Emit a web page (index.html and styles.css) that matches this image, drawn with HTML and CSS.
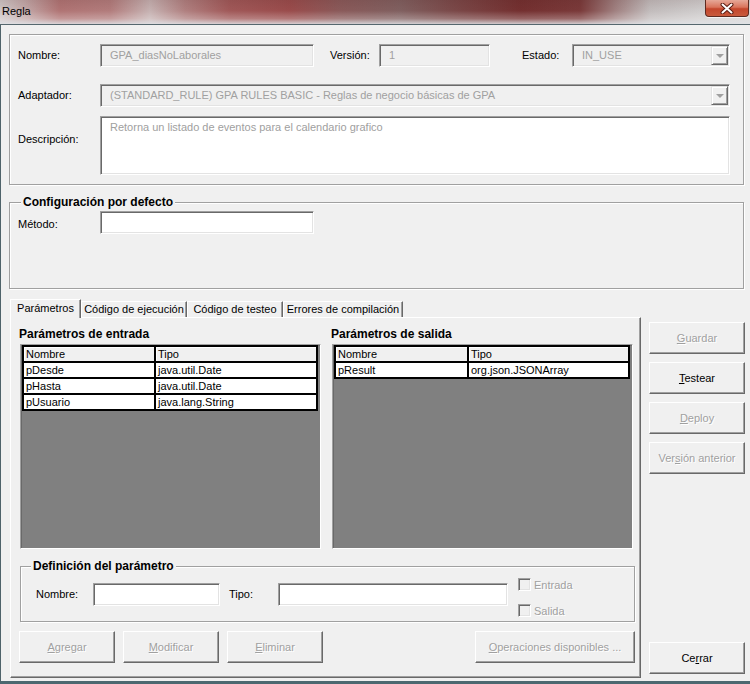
FILE: index.html
```html
<!DOCTYPE html>
<html lang="es">
<head>
<meta charset="utf-8">
<title>Regla</title>
<link rel="stylesheet" href="styles.css">
</head>
<body>
<div class="window">
  <div class="titlebar">
    <span class="title">Regla</span>
    <div class="close-btn">
      <svg width="14" height="11" viewBox="0 0 14 11"><path d="M2.5 1.5 L11.5 9.5 M11.5 1.5 L2.5 9.5" stroke="#5a1c12" stroke-width="4" stroke-linecap="round" fill="none"/><path d="M2.5 1.5 L11.5 9.5 M11.5 1.5 L2.5 9.5" stroke="#ffffff" stroke-width="2" stroke-linecap="round" fill="none"/></svg>
    </div>
  </div>
  <div class="client">
    <section class="group general">
      <div class="row">
        <span class="lbl lbl-main">Nombre:</span>
        <div class="field disabled w-nombre">GPA_diasNoLaborales</div>
        <span class="lbl lbl-version">Versión:</span>
        <div class="field disabled w-version">1</div>
        <span class="lbl lbl-estado">Estado:</span>
        <div class="field disabled combo w-estado"><span class="combo-text">IN_USE</span><span class="combo-btn"><span class="tri"></span></span></div>
      </div>
      <div class="row row-adapt">
        <span class="lbl lbl-main">Adaptador:</span>
        <div class="field disabled combo w-adapt"><span class="combo-text">(STANDARD_RULE) GPA RULES BASIC - Reglas de negocio básicas de GPA</span><span class="combo-btn"><span class="tri"></span></span></div>
      </div>
      <div class="row row-desc">
        <span class="lbl lbl-main lbl-desc">Descripción:</span>
        <div class="field area">Retorna un listado de eventos para el calendario grafico</div>
      </div>
    </section>

    <fieldset class="fgroup config">
      <legend>Configuración por defecto</legend>
      <div class="row">
        <span class="lbl lbl-main lbl-metodo">Método:</span>
        <div class="field white w-nombre"></div>
      </div>
    </fieldset>

    <div class="lower">
      <div class="tabctl">
        <div class="tabstrip">
          <div class="tab active t1">Parámetros</div>
          <div class="tab t2">Código de ejecución</div>
          <div class="tab t3">Código de testeo</div>
          <div class="tab t4">Errores de compilación</div>
        </div>
        <div class="panel">
          <div class="param-cols">
            <div class="param-col">
              <div class="heading">Parámetros de entrada</div>
              <div class="list">
                <table class="grid">
                  <colgroup><col class="c-name"><col></colgroup>
                  <thead><tr><th>Nombre</th><th>Tipo</th></tr></thead>
                  <tbody>
                    <tr><td>pDesde</td><td>java.util.Date</td></tr>
                    <tr><td>pHasta</td><td>java.util.Date</td></tr>
                    <tr><td>pUsuario</td><td>java.lang.String</td></tr>
                  </tbody>
                </table>
              </div>
            </div>
            <div class="param-col">
              <div class="heading">Parámetros de salida</div>
              <div class="list">
                <table class="grid">
                  <colgroup><col class="c-name2"><col></colgroup>
                  <thead><tr><th>Nombre</th><th>Tipo</th></tr></thead>
                  <tbody>
                    <tr><td>pResult</td><td>org.json.JSONArray</td></tr>
                  </tbody>
                </table>
              </div>
            </div>
          </div>

          <fieldset class="fgroup def">
            <legend>Definición del parámetro</legend>
            <div class="def-row">
              <span class="lbl lbl-dn">Nombre:</span>
              <div class="field white w-dn"></div>
              <span class="lbl lbl-dt">Tipo:</span>
              <div class="field white w-dt"></div>
              <div class="checks">
                <div class="chk"><span class="box"></span><span>Entrada</span></div>
                <div class="chk"><span class="box"></span><span>Salida</span></div>
              </div>
            </div>
          </fieldset>

          <div class="action-row">
            <div class="btn disabled w-act"><span><u>A</u>gregar</span></div>
            <div class="btn disabled w-act"><span><u>M</u>odificar</span></div>
            <div class="btn disabled w-act"><span><u>E</u>liminar</span></div>
            <div class="btn disabled w-ops"><span><u>O</u>peraciones disponibles ...</span></div>
          </div>
        </div>
      </div>

      <div class="side">
        <div class="btn disabled"><span><u>G</u>uardar</span></div>
        <div class="btn"><span><u>T</u>estear</span></div>
        <div class="btn disabled"><span><u>D</u>eploy</span></div>
        <div class="btn disabled"><span>Ver<u>s</u>ión anterior</span></div>
        <div class="btn btn-close"><span>Ce<u>r</u>rar</span></div>
      </div>
    </div>
  </div>
</div>
</body>
</html>
```

FILE: styles.css
```css
* { box-sizing: border-box; }

html, body {
  margin: 0;
  padding: 0;
}

body {
  width: 750px;
  height: 684px;
  overflow: hidden;
  background: #f0f0f0;
  font-family: "Liberation Sans", Arial, sans-serif;
  font-size: 11px;
  color: #000;
}

.window {
  width: 750px;
  height: 684px;
  display: flex;
  flex-direction: column;
  background: #f0f0f0;
}

/* ---------- title bar ---------- */
.titlebar {
  flex: none;
  height: 25px;
  display: flex;
  justify-content: space-between;
  align-items: flex-start;
  border-bottom: 1px solid #55676e;
  background:
    linear-gradient(180deg, rgba(60,20,20,0.10) 0%, rgba(255,255,255,0) 45%, rgba(255,255,255,0.25) 78%, rgba(225,228,232,0.85) 100%),
    linear-gradient(90deg, #cfc6c6 0px, #c2a8a8 25px, #b07474 60px, #b27c7c 110px, #c6b2b2 150px, #b08080 185px, #a05858 230px, #9a4c4c 290px, #8a5a5a 340px, #806060 400px, #7a4646 460px, #743030 520px, #7a3a3a 580px, #a08080 615px, #c2bcbc 650px, #cfcccc 700px, #d4d2d2 750px);
}

.title {
  margin: 4px 0 0 2px;
  font-size: 11px;
  line-height: 14px;
  color: #000;
}

.close-btn {
  width: 44px;
  height: 17px;
  margin-right: 1px;
  display: flex;
  align-items: center;
  justify-content: center;
  border: 1px solid #5e2a20;
  border-top: none;
  border-radius: 0 0 4px 4px;
  background: linear-gradient(180deg, #e6a898 0%, #d9745c 45%, #c4462c 55%, #c85a3c 100%);
  box-shadow: 0 1px 0 rgba(255,255,255,0.7);
}

/* ---------- client ---------- */
.client {
  flex: 1;
  display: flex;
  flex-direction: column;
  padding: 9px 0 3px 8px;
  border-left: 1px solid #4f636a;
  border-bottom: 3px solid #4c6870;
}

.group {
  width: 735px;
  border: 1px solid #a0a0a0;
  box-shadow: inset 1px 1px 0 #fff, 1px 1px 0 #fff;
}

.general {
  padding: 9px 8px 9px 8px;
}

.row {
  display: flex;
  align-items: center;
}

.row-adapt { margin-top: 17px; }
.row-desc { margin-top: 9px; align-items: flex-start; }

.lbl {
  line-height: 23px;
  white-space: nowrap;
}

.lbl-main { width: 82px; flex: none; }
.lbl-desc { margin-top: 12px; }
.lbl-metodo { margin-top: 2px; margin-bottom: -2px; }
.lbl-version { width: 49px; margin-left: 16px; flex: none; }
.lbl-estado { width: 50px; margin-left: 32px; flex: none; }

/* sunken field */
.field {
  flex: none;
  height: 23px;
  border: 1px solid;
  border-color: #a0a0a0 #fff #fff #a0a0a0;
  box-shadow: inset 1px 1px 0 #696969, inset -1px -1px 0 #e3e3e3;
  padding-left: 9px;
  line-height: 21px;
  white-space: nowrap;
  overflow: hidden;
}

.field.disabled { background: #f0f0f0; color: #a0a0a0; }
.field.white { background: #fff; }

.field.area {
  width: 630px;
  height: 59px;
  background: #fff;
  color: #a0a0a0;
  line-height: 14px;
  padding-top: 3px;
}

.w-nombre { width: 214px; }
.w-version { width: 111px; }
.w-estado { width: 158px; }
.w-adapt { width: 630px; }

.combo {
  display: flex;
  align-items: stretch;
  padding-right: 1px;
}

.combo-text { flex: 1; overflow: hidden; }

.combo-btn {
  flex: none;
  width: 17px;
  height: 19px;
  margin-top: 1px;
  display: flex;
  align-items: center;
  justify-content: center;
  border: 1px solid;
  border-color: #e3e3e3 #696969 #696969 #e3e3e3;
  box-shadow: inset 1px 1px 0 #fff, inset -1px -1px 0 #a0a0a0;
  background: #f0f0f0;
}

.tri {
  width: 0;
  height: 0;
  border-left: 4px solid transparent;
  border-right: 4px solid transparent;
  border-top: 4px solid #a0a0a0;
  margin-top: 1px;
}

/* ---------- fieldsets ---------- */
.fgroup {
  margin: 0;
  min-width: 0;
  border: 1px solid #a0a0a0;
  box-shadow: inset 1px 1px 0 #fff, 1px 1px 0 #fff;
}

.fgroup legend {
  font-size: 12px;
  font-weight: bold;
  line-height: 14px;
  padding: 0 2px;
  background: #f0f0f0;
}

.config {
  width: 735px;
  margin-top: 10px;
  padding: 2px 8px 54px 8px;
}

.config legend { margin-left: 3px; }

/* ---------- lower area ---------- */
.lower {
  flex: 1;
  display: flex;
  margin-top: 10px;
}

.tabctl {
  width: 631px;
  margin-left: 1px;
  display: flex;
  flex-direction: column;
}

.tabstrip {
  height: 18px;
  display: flex;
  align-items: flex-end;
}

.tab {
  height: 16px;
  line-height: 15px;
  text-align: center;
  white-space: nowrap;
  border-top: 1px solid #fff;
  border-left: 1px solid #fff;
  border-right: 1px solid #696969;
  box-shadow: inset -1px 0 0 #a0a0a0;
  background: #f0f0f0;
}

.tab.active {
  position: relative;
  z-index: 1;
  height: 19px;
  line-height: 17px;
  margin-bottom: -1px;
}

.t1 { width: 71px; }
.t2 { width: 106px; }
.t3 { width: 96px; }
.t4 { width: 120px; }

.panel {
  flex: 1;
  padding: 9px 0 0 8px;
  border-top: 1px solid #fff;
  border-left: 1px solid #fff;
  border-right: 1px solid #696969;
  border-bottom: 1px solid #696969;
  box-shadow: inset -1px -1px 0 #a0a0a0;
}

.param-cols {
  display: grid;
  grid-template-columns: 312px 302px;
}

.heading {
  font-size: 12px;
  font-weight: bold;
  line-height: 14px;
  white-space: nowrap;
}

.list {
  width: 301px;
  height: 205px;
  margin: 3px 0 0 1px;
  padding: 0 0 0 1px;
  background: #808080;
  border: 1px solid;
  border-color: #a0a0a0 #fff #fff #a0a0a0;
  box-shadow: inset 1px 1px 0 #696969;
}

.grid {
  table-layout: fixed;
  width: 296px;
  border-collapse: separate;
  border-spacing: 0;
  border: 1px solid #000;
}

.c-name { width: 132px; }
.c-name2 { width: 133px; }

.grid th,
.grid td {
  height: 16px;
  padding: 0 2px;
  border: 1px solid #000;
  text-align: left;
  font-weight: normal;
  line-height: 14px;
  white-space: nowrap;
  overflow: hidden;
}

.grid th {
  background: #f0f0f0;
  box-shadow: inset 1px 1px 0 #fff;
}

.grid td { background: #fff; }

/* definition */
.def {
  width: 615px;
  margin-top: 10px;
  margin-left: 1px;
  padding: 0 0 4px 15px;
}

.def legend { margin-left: -5px; }

.def-row {
  display: flex;
  align-items: flex-start;
  margin-top: 5px;
}

.def-row .lbl { margin-top: 5px; }
.def-row .field { margin-top: 5px; }

.lbl-dn { width: 57px; flex: none; }
.w-dn { width: 127px; }
.lbl-dt { width: 49px; margin-left: 9px; flex: none; }
.w-dt { width: 230px; }

.checks {
  margin-left: 10px;
  display: flex;
  flex-direction: column;
  gap: 13px;
}

.chk {
  display: flex;
  align-items: center;
  height: 13px;
  color: #a0a0a0;
  text-shadow: 1px 1px 0 #fff;
}

.box {
  width: 13px;
  height: 13px;
  margin-right: 3px;
  border: 1px solid;
  border-color: #a0a0a0 #fff #fff #a0a0a0;
  box-shadow: inset 1px 1px 0 #696969, inset -1px -1px 0 #e3e3e3;
  background: #f0f0f0;
}

/* buttons */
.btn {
  height: 32px;
  display: flex;
  align-items: center;
  justify-content: center;
  border: 1px solid;
  border-color: #fff #696969 #696969 #fff;
  box-shadow: inset -1px -1px 0 #a0a0a0;
  background: #f0f0f0;
  white-space: nowrap;
}

.btn.disabled {
  color: #a0a0a0;
  text-shadow: 1px 1px 0 #fff;
}

.action-row {
  width: 616px;
  margin: 9px 0 0 0;
  display: flex;
  gap: 8px;
}

.w-act { width: 96px; }
.w-ops { width: 160px; margin-left: auto; }

.side {
  width: 96px;
  margin-left: 8px;
  padding: 23px 0 4px 0;
  display: flex;
  flex-direction: column;
  gap: 8px;
}

.btn-close { margin-top: auto; }
```
